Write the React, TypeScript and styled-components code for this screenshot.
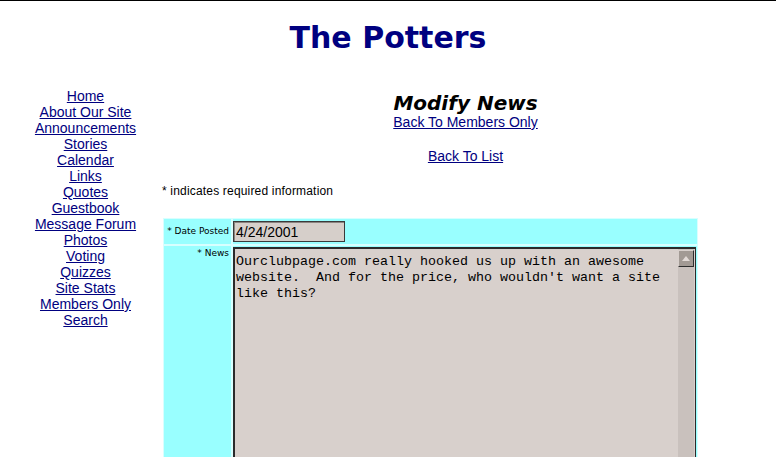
import React from "react";
import styled, { createGlobalStyle } from "styled-components";

const GlobalStyle = createGlobalStyle`
  html, body { margin: 0; padding: 0; background: #ffffff; }
  body { font-family: "Liberation Sans", Arial, sans-serif; color: #000; }
`;

const Page = styled.div`
  border-top: 1px solid #000;
  padding: 0 8px;
`;

const Header = styled.header`
  padding-top: 19px;
  text-align: center;
`;

const Title = styled.h1`
  margin: 0;
  font-family: "DejaVu Sans", Verdana, sans-serif;
  font-weight: bold;
  font-size: 30px;
  line-height: 36px;
  color: #000080;
`;

const Columns = styled.div`
  display: flex;
  align-items: flex-start;
  margin-top: 32px;
`;

const Nav = styled.nav`
  width: 155px;
  flex: none;
  display: flex;
  flex-direction: column;
  align-items: center;
`;

const NavLink = styled.a`
  font-size: 14px;
  line-height: 16px;
  color: #000080;
  text-decoration: underline;
`;

const Main = styled.main`
  flex: 1;
  display: flex;
  flex-direction: column;
  padding-top: 4px;
`;

const Heading = styled.h2`
  margin: 0;
  text-align: center;
  font-family: "DejaVu Sans", Verdana, sans-serif;
  font-weight: bold;
  font-style: italic;
  font-size: 20px;
  line-height: 22px;
`;

const CenterLink = styled.a<{ $gap?: number }>`
  align-self: center;
  margin-top: ${(p) => p.$gap ?? 0}px;
  font-size: 14px;
  line-height: 16px;
  color: #000080;
  text-decoration: underline;
`;

const Note = styled.p`
  margin: 20px 0 0 -1px;
  font-size: 12px;
  letter-spacing: 0.18px;
  line-height: 14px;
`;

const FormTable = styled.div`
  margin-top: 20px;
  width: 533px;
  display: grid;
  grid-template-columns: 67px 1fr;
  gap: 2px;
  padding: 1px;
  background: #d8ffff;
`;

const Label = styled.div<{ $top?: boolean }>`
  background: #99ffff;
  display: flex;
  justify-content: flex-end;
  align-items: ${(p) => (p.$top ? "flex-start" : "center")};
  padding: ${(p) => (p.$top ? "2px 2px 0 0" : "0 2px 0 0")};
  font-family: "DejaVu Sans", Verdana, sans-serif;
  font-size: 9px;
  line-height: 11px;
  white-space: nowrap;
`;

const Value = styled.div<{ $pt: number }>`
  background: #99ffff;
  padding: ${(p) => p.$pt}px 1px 2px 0;
`;

const DateInput = styled.input`
  display: block;
  box-sizing: border-box;
  width: 112px;
  height: 21px;
  margin: 0;
  padding: 0 0 0 2px;
  border: 1px solid #3a3a3a;
  box-shadow: inset 1px 1px 0 #8a8480;
  background: #d6cfca;
  font-family: "Liberation Sans", Arial, sans-serif;
  font-size: 14px;
  color: #000;
  outline: none;
`;

const TextBox = styled.div`
  display: flex;
  box-sizing: border-box;
  height: 232px;
  border: 1px solid #2a2a2a;
  border-top-width: 2px;
  border-left-width: 2px;
  background: #d8d0cc;
`;

const NewsArea = styled.textarea`
  flex: 1;
  margin: 0;
  padding: 5px 2px 0 1px;
  border: none;
  background: transparent;
  resize: none;
  overflow: hidden;
  outline: none;
  font-family: "Liberation Mono", "Courier New", monospace;
  font-size: 13.333px;
  line-height: 16px;
  color: #000;
`;

const ScrollTrack = styled.div`
  width: 16px;
  flex: none;
  margin-right: 1px;
  background: #c9c1bd;
  display: flex;
  flex-direction: column;
`;

const ScrollButton = styled.div`
  box-sizing: border-box;
  height: 17px;
  margin-top: 1px;
  background: #a29a94;
  border: 1px solid #2e2e2e;
  border-top-color: #d8d0cc;
  border-left-color: #d8d0cc;
  display: flex;
  align-items: center;
  justify-content: center;
`;

const NAV = [
  "Home",
  "About Our Site",
  "Announcements",
  "Stories",
  "Calendar",
  "Links",
  "Quotes",
  "Guestbook",
  "Message Forum",
  "Photos",
  "Voting",
  "Quizzes",
  "Site Stats",
  "Members Only",
  "Search",
];

const NEWS =
  "Ourclubpage.com really hooked us up with an awesome website.  And for the price, who wouldn't want a site like this?";

export default function App() {
  return (
    <Page>
      <GlobalStyle />
      <Header>
        <Title>The Potters</Title>
      </Header>
      <Columns>
        <Nav>
          {NAV.map((n) => (
            <NavLink key={n} href="#">
              {n}
            </NavLink>
          ))}
        </Nav>
        <Main>
          <Heading>Modify News</Heading>
          <CenterLink href="#">Back To Members Only</CenterLink>
          <CenterLink href="#" $gap={18}>
            Back To List
          </CenterLink>
          <Note>* indicates required information</Note>
          <FormTable>
            <Label>* Date Posted</Label>
            <Value $pt={2}>
              <DateInput defaultValue="4/24/2001" />
            </Value>
            <Label $top>* News</Label>
            <Value $pt={1}>
              <TextBox>
                <NewsArea defaultValue={NEWS} spellCheck={false} />
                <ScrollTrack>
                  <ScrollButton>
                    <svg width="8" height="5" viewBox="0 0 8 5">
                      <polygon points="4,0 8,5 0,5" fill="#e2dad6" />
                    </svg>
                  </ScrollButton>
                </ScrollTrack>
              </TextBox>
            </Value>
          </FormTable>
        </Main>
      </Columns>
    </Page>
  );
}
